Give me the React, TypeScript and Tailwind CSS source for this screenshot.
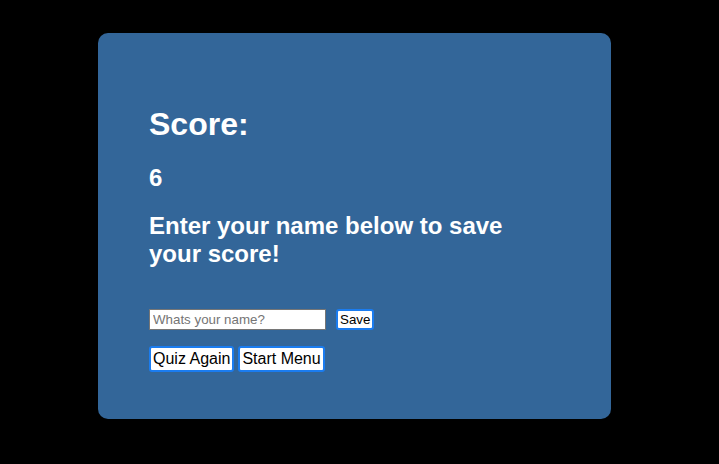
export default function App() {
  return (
    <div className="min-h-[464px] bg-black pt-[33px] pl-[98px] font-['Liberation_Sans',Arial,sans-serif]">
      <div className="w-[513px] h-[386px] rounded-[10px] bg-[#336699] px-[51px] pt-[52px] text-white">
        <h1 className="mt-[21px] text-[32px] font-bold leading-[37px]">Score:</h1>
        <h2 className="mt-[21px] text-[24px] font-bold leading-[28px]">6</h2>
        <h2 className="mt-[20px] w-[380px] text-[24px] font-bold leading-[28px]">
          Enter your name below to save your score!
        </h2>
        <div className="mt-[41px] flex items-center gap-[10px]">
          <input
            placeholder="Whats your name?"
            className="h-[21px] w-[177px] border border-[#767676] bg-white pl-[3px] text-[13.33px] text-black placeholder:text-[#757575] outline-none"
          />
          <button className="h-[21px] rounded-[3px] border-2 border-[#1a7cf0] bg-white px-[2px] text-[13.33px] leading-none text-black">
            Save
          </button>
        </div>
        <div className="mt-[16px] flex gap-[4px]">
          <button className="h-[26px] rounded-[3px] border-2 border-[#1a7cf0] bg-white px-[2px] text-[16px] leading-none text-black">
            Quiz Again
          </button>
          <button className="h-[26px] rounded-[3px] border-2 border-[#1a7cf0] bg-white px-[2px] text-[16px] leading-none text-black">
            Start Menu
          </button>
        </div>
      </div>
    </div>
  );
}
